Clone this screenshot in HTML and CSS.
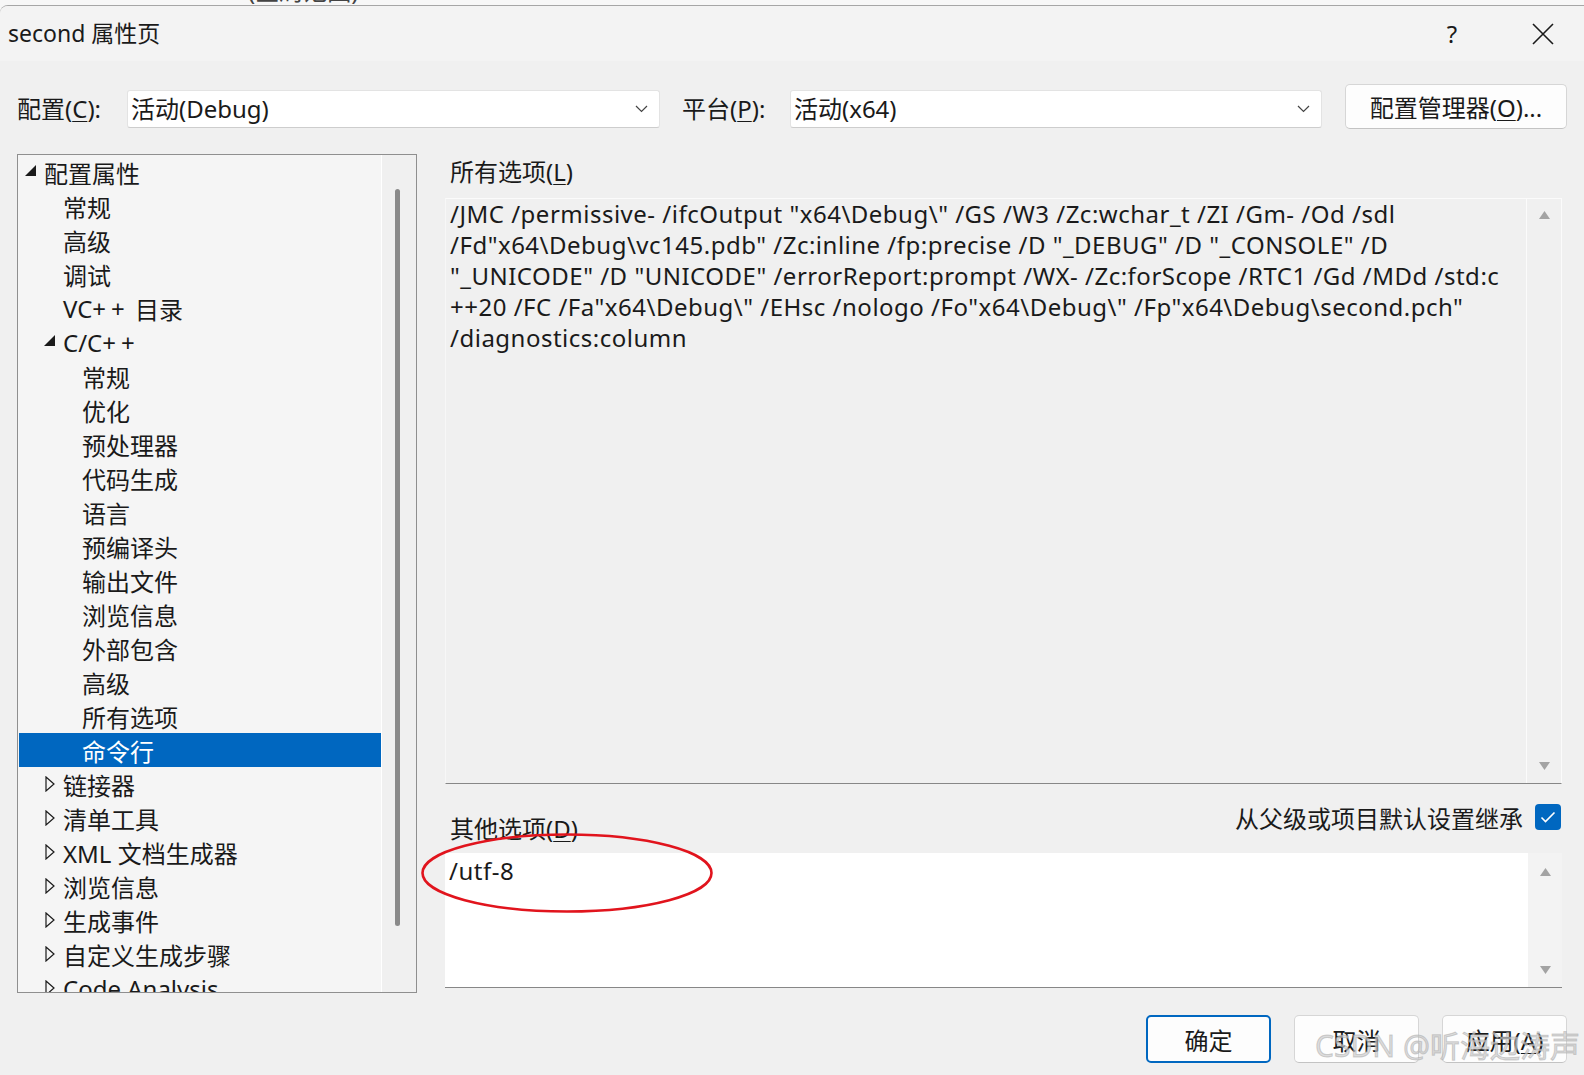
FILE: index.html
```html
<!DOCTYPE html>
<html lang="zh-CN">
<head>
  <meta charset="UTF-8" />
  <title>second 属性页</title>
  <link rel="stylesheet" href="styles.css">
</head>
<body>
  <div class="behind"><span class="behind-text">(全局范围)</span></div>

  <div class="dialog">
    <div class="titlebar">
      <div class="title">second 属性页</div>
      <div class="title-btn help">?</div>
      <div class="title-btn close">
        <svg width="22" height="22" viewBox="0 0 22 22"><path d="M1 1 L21 21 M21 1 L1 21" stroke="#1a1a1a" stroke-width="1.6" fill="none"/></svg>
      </div>
    </div>

    <div class="content">
      <div class="config-row">
        <div class="row-label">配置(<u>C</u>):</div>
        <div class="combo combo-config">
          <span class="combo-text">活动(Debug)</span>
          <svg class="chevron" width="13" height="8" viewBox="0 0 13 8"><path d="M1 1 L6.5 6.5 L12 1" stroke="#444" stroke-width="1.2" fill="none"/></svg>
        </div>
        <div class="row-label platform-label">平台(<u>P</u>):</div>
        <div class="combo combo-platform">
          <span class="combo-text">活动(x64)</span>
          <svg class="chevron" width="13" height="8" viewBox="0 0 13 8"><path d="M1 1 L6.5 6.5 L12 1" stroke="#444" stroke-width="1.2" fill="none"/></svg>
        </div>
        <button class="btn btn-manager">配置管理器(<u>O</u>)...</button>
      </div>

      <div class="main">
        <div class="tree">
          <div class="tree-list">
            <div class="node lv0"><span class="toggle"><svg class="tri-open" width="11" height="11" viewBox="0 0 11 11"><path d="M11 0 L11 11 L0 11 Z" fill="#1a1a1a"/></svg></span>配置属性</div>
            <div class="node lv1"><span class="toggle"></span>常规</div>
            <div class="node lv1"><span class="toggle"></span>高级</div>
            <div class="node lv1"><span class="toggle"></span>调试</div>
            <div class="node lv1"><span class="toggle"></span>VC<span class="pp">+</span>+<span class="word-gap"> 目录</span></div>
            <div class="node lv1"><span class="toggle"><svg class="tri-open" width="11" height="11" viewBox="0 0 11 11"><path d="M11 0 L11 11 L0 11 Z" fill="#1a1a1a"/></svg></span>C/C<span class="pp">+</span>+</div>
            <div class="node lv2"><span class="toggle"></span>常规</div>
            <div class="node lv2"><span class="toggle"></span>优化</div>
            <div class="node lv2"><span class="toggle"></span>预处理器</div>
            <div class="node lv2"><span class="toggle"></span>代码生成</div>
            <div class="node lv2"><span class="toggle"></span>语言</div>
            <div class="node lv2"><span class="toggle"></span>预编译头</div>
            <div class="node lv2"><span class="toggle"></span>输出文件</div>
            <div class="node lv2"><span class="toggle"></span>浏览信息</div>
            <div class="node lv2"><span class="toggle"></span>外部包含</div>
            <div class="node lv2"><span class="toggle"></span>高级</div>
            <div class="node lv2"><span class="toggle"></span>所有选项</div>
            <div class="node lv2 selected"><span class="toggle"></span>命令行</div>
            <div class="node lv1"><span class="toggle"><svg class="tri-closed" width="10" height="16" viewBox="0 0 10 16"><path d="M1 1 L9 8 L1 15 Z" fill="none" stroke="#1a1a1a" stroke-width="1.2"/></svg></span>链接器</div>
            <div class="node lv1"><span class="toggle"><svg class="tri-closed" width="10" height="16" viewBox="0 0 10 16"><path d="M1 1 L9 8 L1 15 Z" fill="none" stroke="#1a1a1a" stroke-width="1.2"/></svg></span>清单工具</div>
            <div class="node lv1"><span class="toggle"><svg class="tri-closed" width="10" height="16" viewBox="0 0 10 16"><path d="M1 1 L9 8 L1 15 Z" fill="none" stroke="#1a1a1a" stroke-width="1.2"/></svg></span>XML 文档生成器</div>
            <div class="node lv1"><span class="toggle"><svg class="tri-closed" width="10" height="16" viewBox="0 0 10 16"><path d="M1 1 L9 8 L1 15 Z" fill="none" stroke="#1a1a1a" stroke-width="1.2"/></svg></span>浏览信息</div>
            <div class="node lv1"><span class="toggle"><svg class="tri-closed" width="10" height="16" viewBox="0 0 10 16"><path d="M1 1 L9 8 L1 15 Z" fill="none" stroke="#1a1a1a" stroke-width="1.2"/></svg></span>生成事件</div>
            <div class="node lv1"><span class="toggle"><svg class="tri-closed" width="10" height="16" viewBox="0 0 10 16"><path d="M1 1 L9 8 L1 15 Z" fill="none" stroke="#1a1a1a" stroke-width="1.2"/></svg></span>自定义生成步骤</div>
            <div class="node lv1"><span class="toggle"><svg class="tri-closed" width="10" height="16" viewBox="0 0 10 16"><path d="M1 1 L9 8 L1 15 Z" fill="none" stroke="#1a1a1a" stroke-width="1.2"/></svg></span>Code Analysis</div>
          </div>
          <div class="tree-scroll"><div class="thumb"></div></div>
        </div>

        <div class="panel">
          <div class="field-label">所有选项(<u>L</u>)</div>
          <div class="textbox readonly">
            <div class="text-body">
              <div class="line">/JMC /permissive- /ifcOutput "x64\Debug\" /GS /W3 /Zc:wchar_t /ZI /Gm- /Od /sdl</div>
              <div class="line">/Fd"x64\Debug\vc145.pdb" /Zc:inline /fp:precise /D "_DEBUG" /D "_CONSOLE" /D</div>
              <div class="line">"_UNICODE" /D "UNICODE" /errorReport:prompt /WX- /Zc:forScope /RTC1 /Gd /MDd /std:c</div>
              <div class="line">++20 /FC /Fa"x64\Debug\" /EHsc /nologo /Fo"x64\Debug\" /Fp"x64\Debug\second.pch"</div>
              <div class="line">/diagnostics:column</div>
            </div>
            <div class="vscroll">
              <svg width="11" height="8" viewBox="0 0 11 8"><path d="M5.5 0 L11 8 L0 8 Z" fill="#a3a3a3"/></svg>
              <svg width="11" height="8" viewBox="0 0 11 8"><path d="M0 0 L11 0 L5.5 8 Z" fill="#a3a3a3"/></svg>
            </div>
          </div>

          <div class="mid">
            <div class="mid-label">其他选项(<u>D</u>)</div>
            <label class="inherit">
              <span>从父级或项目默认设置继承</span>
              <span class="checkbox">
                <svg width="16" height="12" viewBox="0 0 16 12"><path d="M1.5 6.5 L5.5 10.5 L14.5 1.5" stroke="#fff" stroke-width="1.6" fill="none"/></svg>
              </span>
            </label>
          </div>

          <div class="textbox editable">
            <div class="text-body">
              <div class="line">/utf-8</div>
            </div>
            <div class="vscroll light">
              <svg width="11" height="8" viewBox="0 0 11 8"><path d="M5.5 0 L11 8 L0 8 Z" fill="#a3a3a3"/></svg>
              <svg width="11" height="8" viewBox="0 0 11 8"><path d="M0 0 L11 0 L5.5 8 Z" fill="#a3a3a3"/></svg>
            </div>
          </div>
        </div>
      </div>

      <div class="footer">
        <button class="btn btn-foot primary">确定</button>
        <button class="btn btn-foot">取消</button>
        <button class="btn btn-foot">应用(<u>A</u>)</button>
      </div>
    </div>
  </div>

  <!-- annotation + watermark laid over the dialog -->
  <svg class="mark" width="294" height="82" viewBox="0 0 294 82">
    <ellipse cx="147" cy="41" rx="144.5" ry="38.5" fill="none" stroke="#e1141d" stroke-width="2.6"/>
  </svg>
  <div class="watermark">CSDN @听海边涛声</div>
</body>
</html>
```

FILE: styles.css
```css
* { margin: 0; padding: 0; box-sizing: border-box; }
body {
  width: 1584px; height: 1075px; overflow: hidden; position: relative;
  background: #f7f7f7; color: #1a1a1a;
  font-family: "Noto Sans", "Noto Sans CJK SC", sans-serif; font-size: 24px;
}
u { text-decoration-thickness: 1px; text-underline-offset: 3px; }

.behind { height: 5px; overflow: hidden; }
.behind-text { display: block; padding-left: 248px; margin-top: -22px; line-height: 26px; color: #444; }

.dialog {
  height: 1070px; background: #f0f0f0;
  border-top: 1px solid #a6a6a6; border-top-left-radius: 8px;
  display: flex; flex-direction: column;
}
.titlebar {
  height: 55px; background: #f3f3f3; border-top-left-radius: 8px;
  display: flex; align-items: center; padding-left: 8px;
}
.title { flex: 1; font-size: 23px; line-height: 30px; margin-top: -2px; }
.title-btn { height: 55px; display: flex; align-items: center; justify-content: center; }
.help { width: 100px; font-size: 24px; }
.close { width: 82px; }

.content { flex: 1; padding: 0 17px; display: flex; flex-direction: column; }

.config-row { margin-top: 23px; height: 45px; display: flex; align-items: flex-start; }
.row-label { width: 110px; height: 38px; margin-top: 6px; line-height: 38px; }
.platform-label { width: 108px; margin-left: 22px; }
.combo {
  height: 38px; margin-top: 6px; background: #fff;
  border: 1px solid #e3e3e3; border-bottom-color: #cdcdcd; border-radius: 3px;
  display: flex; align-items: center; padding: 0 11px 0 3px;
}
.combo-config { width: 533px; }
.combo-platform { width: 532px; }
.combo-text { flex: 1; line-height: 30px; }

.btn {
  font: inherit; color: inherit; background: #fdfdfd;
  border: 1px solid #d6d6d6; border-bottom-color: #c3c3c3; border-radius: 5px;
}
.btn-manager { width: 222px; height: 45px; margin-left: 23px; }

.main { margin-top: 25px; height: 839px; display: flex; }

.tree { width: 400px; border: 1px solid #8f8f8f; background: #f0f0f0; display: flex; }
.tree-list {
  width: 364px; background: #f5f5f5; border-right: 1px solid #fff;
  padding: 0 0 0 1px; overflow: hidden;
}
.node { height: 34px; display: flex; align-items: center; white-space: pre; }
.node.lv0 { padding-left: 6px; }
.node.lv1 { padding-left: 25px; }
.node.lv2 { padding-left: 44px; }
.node.selected { background: #0067c0; color: #fff; }
.pp { margin-right: 5px; }
.word-gap { margin-left: 4px; }
.toggle { width: 19px; height: 34px; display: flex; align-items: center; flex-shrink: 0; }
.tri-open { margin-top: -3px; }
.tri-closed { margin-left: 1px; }
.tree-scroll { flex: 1; padding: 34px 0 0 13px; }
.thumb { width: 5px; height: 737px; background: #8a8a8a; border-radius: 3px; }

.panel { flex: 1; margin-left: 28px; margin-right: 5px; display: flex; flex-direction: column; }
.field-label { height: 44px; line-height: 36px; padding-left: 5px; }

.textbox { display: flex; border-bottom: 1px solid #878787; }
.textbox.readonly {
  height: 586px; background: #f0f0f0;
  border-top: 1px solid #fbfbfb; border-right: 1px solid #fbfbfb; border-left: 1px solid #f7f7f7;
}
.textbox.editable { height: 135px; background: #fff; }
.text-body { flex: 1; padding: 0 0 0 4px; line-height: 31px; letter-spacing: 0.5px; overflow: hidden; }
.readonly .text-body { margin-top: -1px; }
.editable .text-body { padding-top: 2px; }
.line { white-space: nowrap; }
.vscroll {
  width: 35px; border-left: 1px solid #fbfbfb;
  display: flex; flex-direction: column; justify-content: space-between; align-items: center;
  padding: 12px 0 13px;
}
.vscroll.light { background: #f3f3f3; border-left-color: #fff; padding: 15px 0 13px; }

.mid { height: 69px; display: flex; justify-content: space-between; }
.mid-label { align-self: flex-end; margin-bottom: 7px; line-height: 34px; padding-left: 5px; }
.inherit { margin-top: 16px; height: 34px; display: flex; align-items: center; gap: 12px; }
.checkbox {
  width: 26px; height: 26px; border-radius: 4px; background: #0067c0;
  display: flex; align-items: center; justify-content: center; margin-right: 1px;
}

.footer { margin-top: 22px; display: flex; justify-content: flex-end; gap: 23px; }
.btn-foot { width: 125px; height: 48px; }
.btn-foot.primary { border: 2px solid #0067c0; background: #fdfdfd; }

.mark { position: absolute; left: 420px; top: 832px; }
.watermark {
  position: absolute; left: 1315px; top: 1026px;
  font-size: 30px; line-height: 40px; white-space: nowrap;
  color: rgba(205, 205, 205, 0.7);
  -webkit-text-stroke: 1px rgba(150, 150, 150, 0.4);
}
```
